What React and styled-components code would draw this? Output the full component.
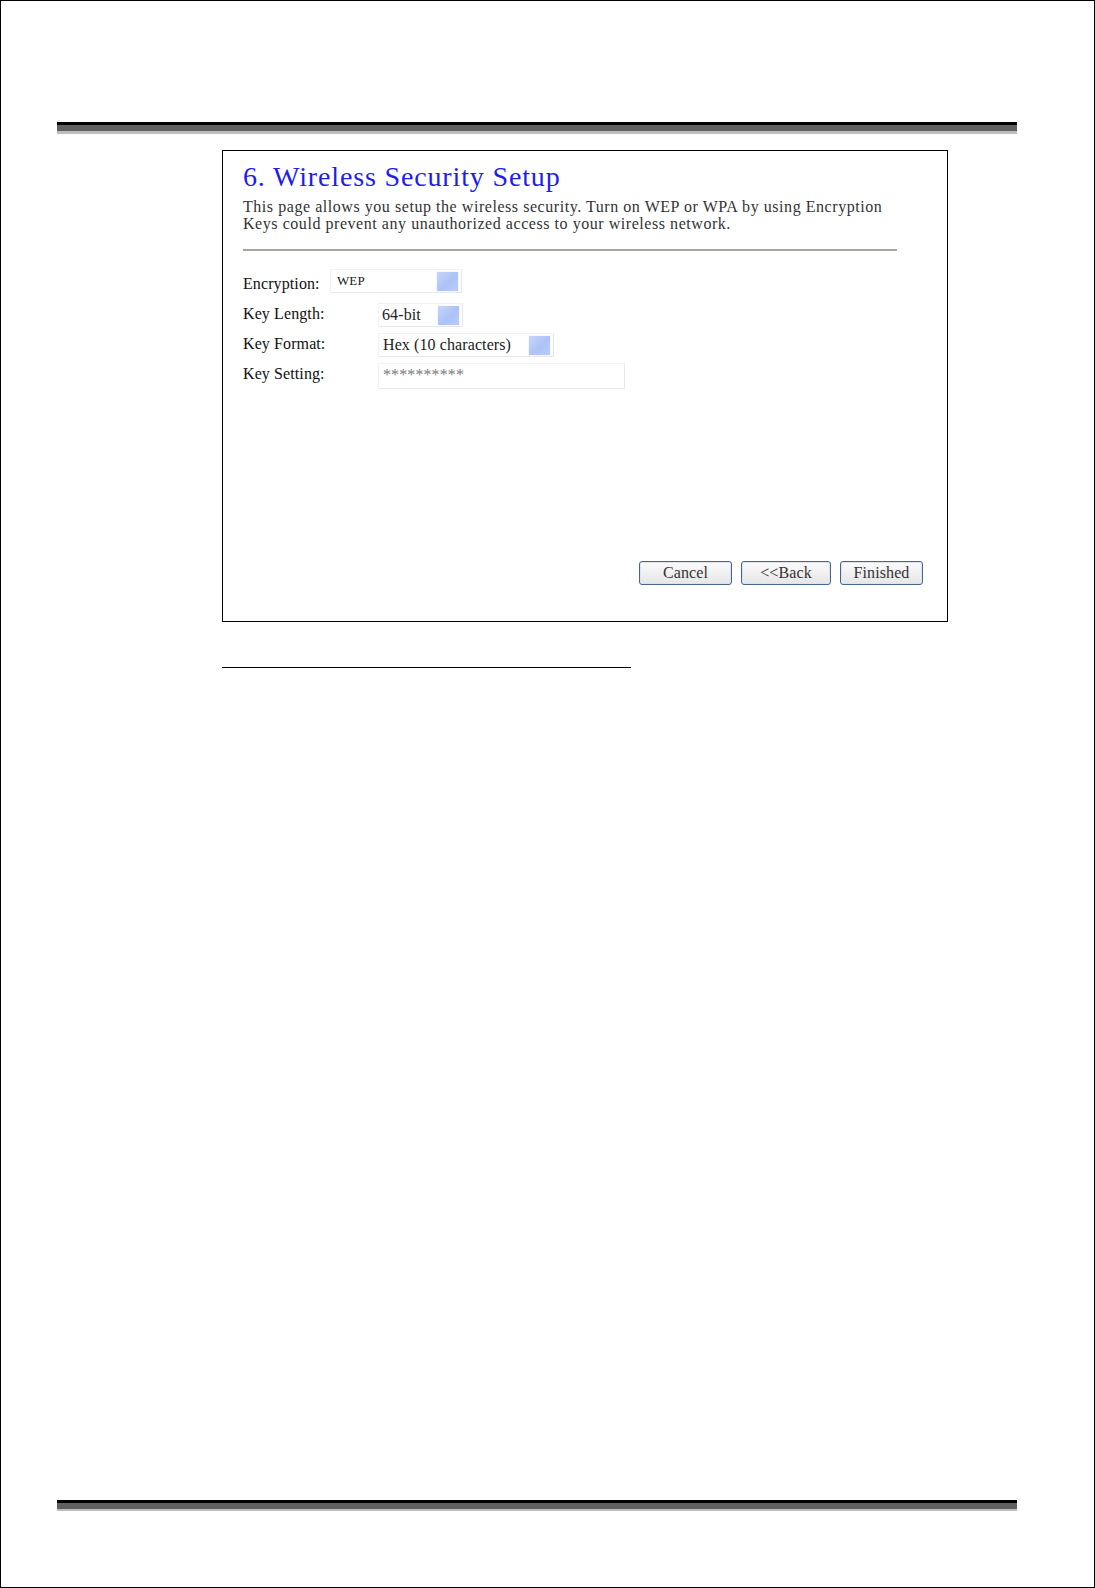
import React from "react";
import styled, { createGlobalStyle } from "styled-components";

const GlobalStyle = createGlobalStyle`
  html,
  body {
    margin: 0;
    padding: 0;
    background: #fff;
  }
  body {
    font-family: "Liberation Serif", "Times New Roman", serif;
  }
`;

const Page = styled.div`
  box-sizing: border-box;
  width: 1095px;
  height: 1588px;
  border: 1px solid #000;
  display: flex;
  flex-direction: column;
  padding-top: 121px;
`;

const HeaderRule = styled.div`
  margin-left: 56px;
  width: 960px;
  height: 6px;
  background: #606060;
  border-top: 3px solid #000;
  border-bottom: ${({ $light }) => $light}px solid #bdbdbd;
`;

const FooterRule = styled(HeaderRule)`
  margin-top: auto;
  margin-bottom: 76px;
`;

const Panel = styled.div`
  box-sizing: border-box;
  margin: 16px 0 0 221px;
  width: 726px;
  height: 472px;
  border: 1px solid #000;
  display: flex;
  flex-direction: column;
  padding: 10px 24px 36px 20px;
`;

const Title = styled.h1`
  margin: 0;
  font-size: 28px;
  line-height: 32px;
  font-weight: normal;
  letter-spacing: 0.85px;
  color: #1d1df2;
`;

const Intro = styled.p`
  margin: 5px 0 0;
  font-size: 16px;
  line-height: 17px;
  letter-spacing: 0.55px;
  color: #333;
`;

const Divider = styled.div`
  width: 654px;
  margin-top: 17px;
  border-top: 2px solid #a9a797;
`;

const Form = styled.div`
  margin-top: 18px;
  display: flex;
  flex-direction: column;
`;

const Row = styled.div`
  display: flex;
  height: 30px;
  align-items: ${({ $top }) => ($top ? "flex-start" : "flex-end")};
`;

const Label = styled.span`
  width: ${({ $w }) => $w}px;
  align-self: flex-start;
  font-size: 16px;
  line-height: 30px;
  letter-spacing: 0.1px;
  color: #111;
`;

const Field = styled.div`
  box-sizing: border-box;
  width: ${({ $w }) => $w}px;
  height: ${({ $h }) => $h || 24}px;
  margin-bottom: ${({ $h }) => ($h ? 0 : 2)}px;
  border: 1px solid #e8e8e8;
  border-top-color: #f2f2f2;
  border-left-color: #f2f2f2;
  background: #fff;
  display: flex;
  align-items: flex-start;
  padding: 2px 3px 0 ${({ $pad }) => $pad}px;
`;

const FieldText = styled.span`
  flex: 1;
  font-size: ${({ $size }) => $size || 16}px;
  line-height: 18px;
  letter-spacing: 0.1px;
  color: ${({ $muted }) => ($muted ? "#7a7a7a" : "#222")};
`;

const Arrow = styled.span`
  width: 21px;
  height: 19px;
  background: linear-gradient(135deg, #c6d5fb 0%, #adc3f6 55%, #b9ccf8 100%);
  box-shadow: 0 0 1px #c9d7fb;
`;

const ButtonBar = styled.div`
  margin-top: auto;
  display: flex;
  justify-content: flex-end;
  gap: 9px;
`;

const Button = styled.button`
  box-sizing: border-box;
  width: ${({ $w }) => $w}px;
  height: 24px;
  padding: 0;
  border: 1px solid #46658f;
  border-radius: 3px;
  background: linear-gradient(#fbfbfb, #e6e6e6);
  box-shadow: inset 0 0 0 1px #dbe3ee;
  font-family: "Liberation Serif", "Times New Roman", serif;
  font-size: 16px;
  letter-spacing: 0.1px;
  color: #333;
  cursor: pointer;
`;

const NoteLine = styled.div`
  margin: 45px 0 0 221px;
  width: 409px;
  border-top: 1px solid #000;
`;

const Select = ({ w, pad, size, children }) => (
  <Field $w={w} $pad={pad}>
    <FieldText $size={size}>{children}</FieldText>
    <Arrow />
  </Field>
);

export default function App() {
  return (
    <>
      <GlobalStyle />
      <Page>
        <HeaderRule $light={3} />
        <Panel>
          <Title>6. Wireless Security Setup</Title>
          <Intro>
            This page allows you setup the wireless security. Turn on WEP or WPA by using Encryption
            <br />
            Keys could prevent any unauthorized access to your wireless network.
          </Intro>
          <Divider />
          <Form>
            <Row $top>
              <Label $w={87}>Encryption:</Label>
              <Select w={132} pad={6} size={13}>
                WEP
              </Select>
            </Row>
            <Row>
              <Label $w={135}>Key Length:</Label>
              <Select w={85} pad={3}>
                64-bit
              </Select>
            </Row>
            <Row>
              <Label $w={135}>Key Format:</Label>
              <Select w={176} pad={4}>
                Hex (10 characters)
              </Select>
            </Row>
            <Row>
              <Label $w={135}>Key Setting:</Label>
              <Field $w={247} $h={26} $pad={4}>
                <FieldText $muted>**********</FieldText>
              </Field>
            </Row>
          </Form>
          <ButtonBar>
            <Button $w={93}>Cancel</Button>
            <Button $w={90}>&lt;&lt;Back</Button>
            <Button $w={83}>Finished</Button>
          </ButtonBar>
        </Panel>
        <NoteLine />
        <FooterRule $light={2} />
      </Page>
    </>
  );
}
